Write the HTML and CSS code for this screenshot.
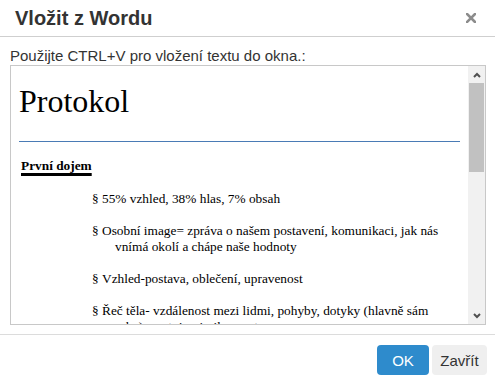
FILE: index.html
```html
<!DOCTYPE html>
<html lang="cs">
<head>
<meta charset="utf-8">
<title>Vložit z Wordu</title>
<link rel="stylesheet" href="styles.css">
</head>
<body>
<div class="dialog">
  <div class="dlg-header">
    <h1 class="dlg-title">Vložit z Wordu</h1>
    <span class="dlg-close" aria-label="Zavřít">
      <svg width="10" height="10" viewBox="0 0 10 10"><path d="M1 1 L9 9 M9 1 L1 9" stroke="#8c8c8c" stroke-width="2.6" stroke-linecap="square"/></svg>
    </span>
  </div>
  <div class="dlg-body">
    <div class="dlg-label">Použijte CTRL+V pro vložení textu do okna.:</div>
    <div class="paste-frame">
      <div class="paste-content">
        <p class="doc-title">Protokol</p>
        <p class="doc-heading"><span class="u">První dojem</span></p>
        <p class="doc-item"><span class="sect">§</span>55% vzhled, 38% hlas, 7% obsah</p>
        <p class="doc-item"><span class="sect">§</span>Osobní image= zpráva o našem postavení, komunikaci, jak nás vnímá okolí a chápe naše hodnoty</p>
        <p class="doc-item"><span class="sect">§</span>Vzhled-postava, oblečení, upravenost</p>
        <p class="doc-item"><span class="sect">§</span>Řeč těla- vzdálenost mezi lidmi, pohyby, dotyky (hlavně sám sebe), postoj, mimika, gesta</p>
      </div>
      <div class="scrollbar">
        <div class="sb-btn">
          <svg width="8" height="6" viewBox="0 0 8 6"><path d="M1 5 L4 2 L7 5" fill="none" stroke="#505050" stroke-width="2"/></svg>
        </div>
        <div class="sb-track"><div class="sb-thumb"></div></div>
        <div class="sb-btn">
          <svg width="8" height="6" viewBox="0 0 8 6"><path d="M1 1 L4 4 L7 1" fill="none" stroke="#505050" stroke-width="2"/></svg>
        </div>
      </div>
    </div>
  </div>
  <div class="dlg-footer">
    <button class="btn btn-ok">OK</button>
    <button class="btn btn-close">Zavřít</button>
  </div>
</div>
</body>
</html>
```

FILE: styles.css
```css
html, body {
  margin: 0;
  padding: 0;
  background: #fff;
}
.dialog {
  width: 495px;
  height: 384px;
  display: flex;
  flex-direction: column;
  font-family: "Liberation Sans", Arial, sans-serif;
  color: #333;
}
.dlg-header {
  height: 36px;
  border-bottom: 1px solid #cfcfcf;
  display: flex;
  align-items: center;
  justify-content: space-between;
  padding: 0 19px 0 15px;
}
.dlg-title {
  margin: 0;
  font-size: 20px;
  font-weight: bold;
  line-height: 36px;
  color: #333;
}
.dlg-close {
  display: flex;
  width: 10px;
  height: 10px;
}
.dlg-body {
  padding: 10px 9px 0 10px;
}
.dlg-label {
  font-size: 15px;
  line-height: 18px;
  color: #333;
}
.paste-frame {
  height: 258px;
  border: 1px solid #c8c8c8;
  display: flex;
  overflow: hidden;
}
.paste-content {
  flex: 1;
  padding: 0 8px;
  overflow: hidden;
  font-family: "Liberation Serif", "Times New Roman", serif;
  color: #000;
}
.doc-title {
  margin: 17px 0 0;
  font-size: 32px;
  line-height: 37px;
  padding-bottom: 21px;
  border-bottom: 1px solid #4a7bb5;
}
.doc-heading {
  margin: 16px 0 0 2px;
  font-size: 13.33px;
  font-weight: bold;
}
.u {
  text-decoration: underline;
  text-decoration-thickness: 3px;
  text-underline-offset: 3px;
}
.doc-item {
  margin: 17px 0 0 96px;
  text-indent: -23px;
  font-size: 13.33px;
  line-height: 15.33px;
}
.sect {
  display: inline-block;
  text-indent: 0;
  width: 10px;
}
.scrollbar {
  width: 17px;
  background: #f1f1f1;
  display: flex;
  flex-direction: column;
}
.sb-btn {
  height: 17px;
  display: flex;
  align-items: center;
  justify-content: center;
}
.sb-track {
  flex: 1;
  padding: 0 1px;
}
.sb-thumb {
  height: 89px;
  background: #c1c1c1;
}
.dlg-footer {
  margin-top: 9px;
  border-top: 1px solid #dcdcdc;
  padding: 10px 8px 0 0;
  display: flex;
  justify-content: flex-end;
  gap: 3px;
}
.btn {
  height: 30px;
  border: none;
  border-radius: 4px;
  font-family: "Liberation Sans", Arial, sans-serif;
  font-size: 15px;
  padding: 0;
  text-align: center;
}
.btn-ok {
  width: 52px;
  background: #2e8bcc;
  color: #fff;
}
.btn-close {
  width: 55px;
  background: #efefef;
  color: #333;
}
```
